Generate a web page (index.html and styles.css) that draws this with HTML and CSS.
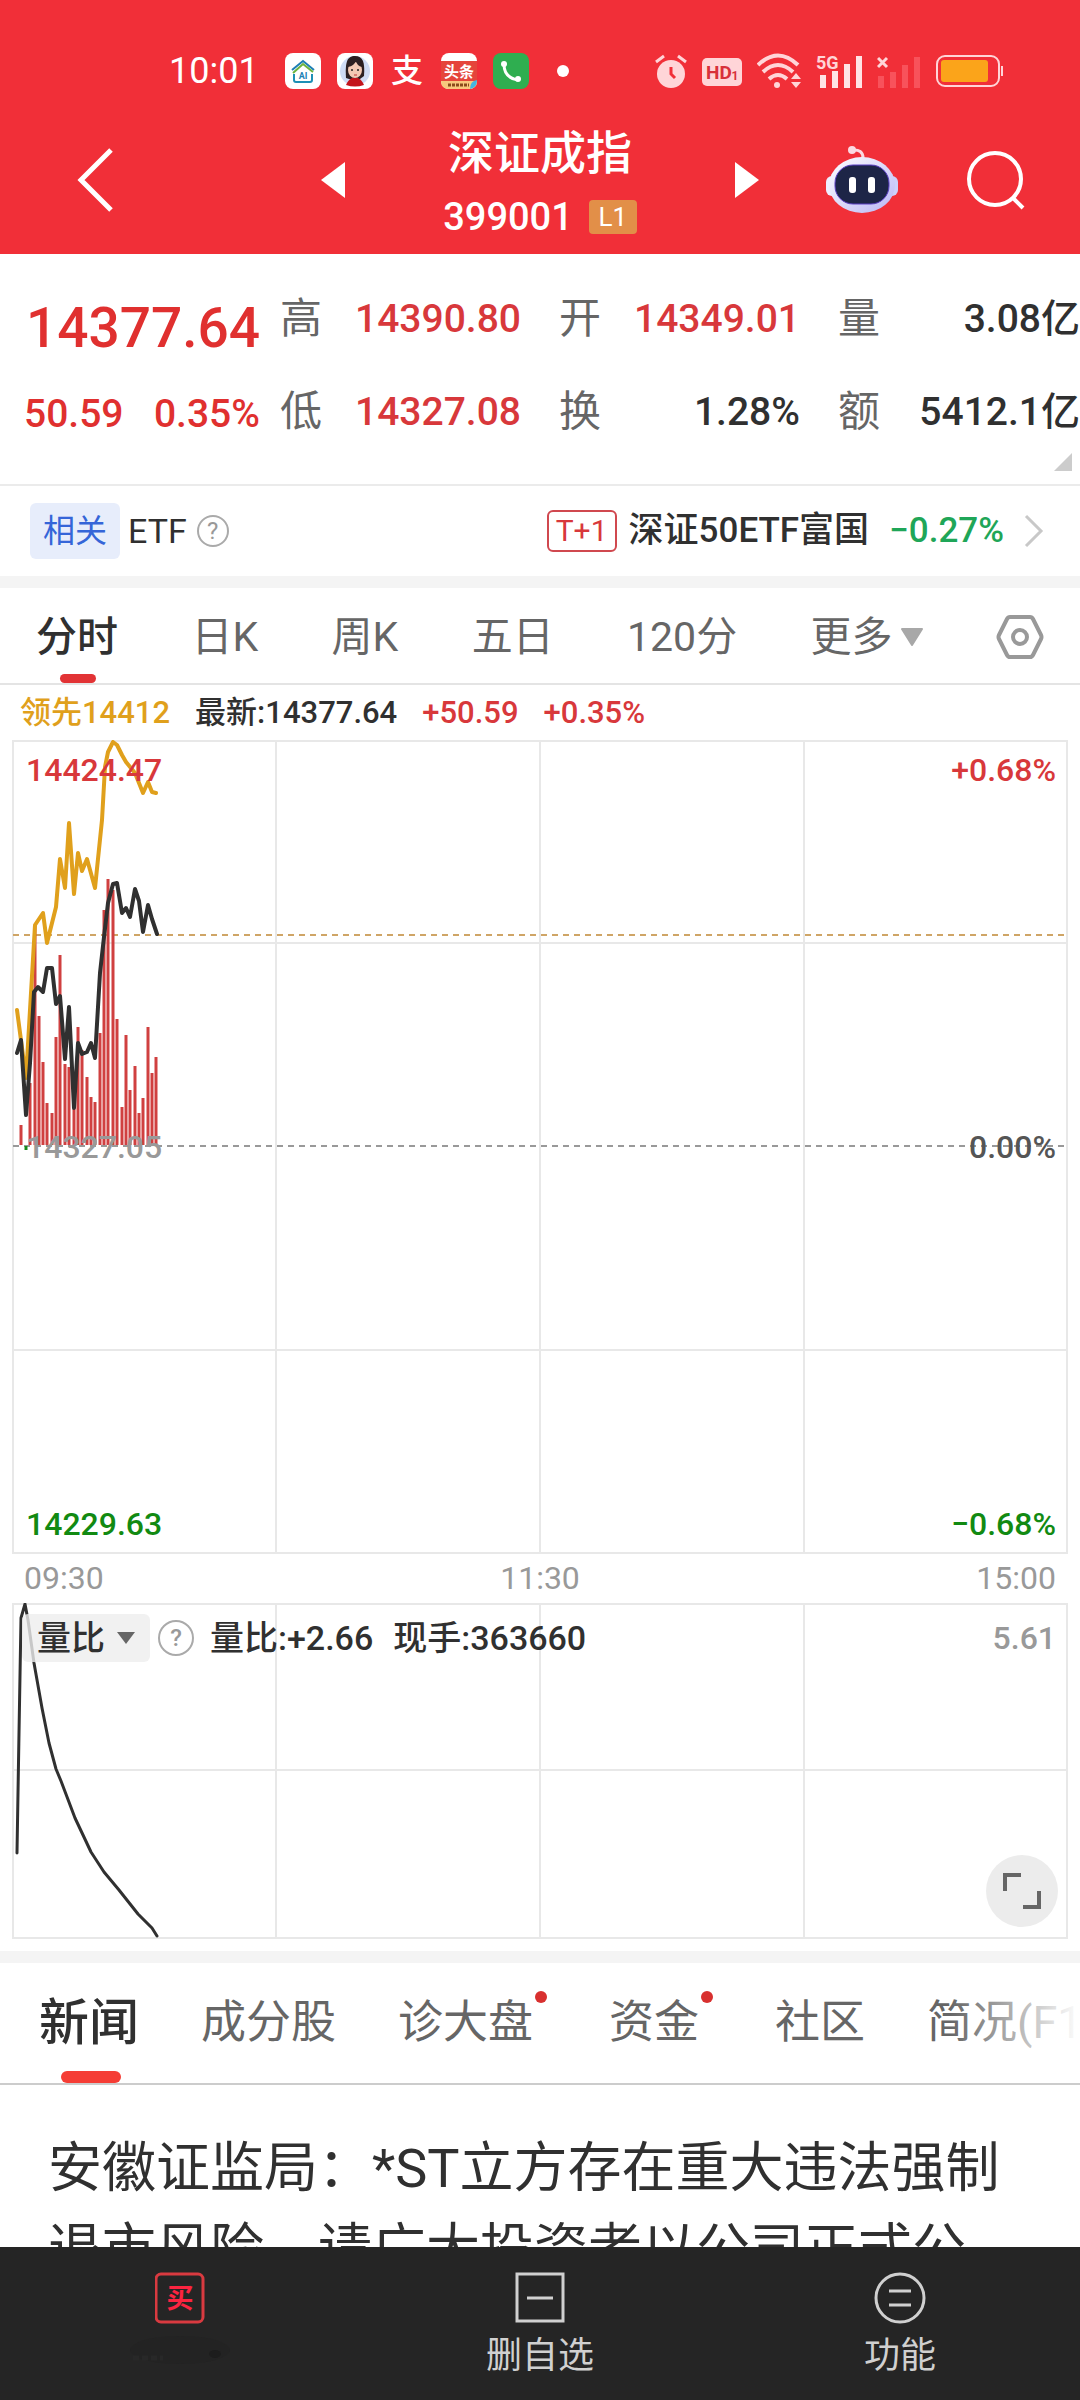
FILE: index.html
```html
<!doctype html>
<html lang="zh-CN">
<head>
    <meta charset="UTF-8">
    <meta name="viewport" content="width=device-width, initial-scale=1.0">
    <title>深证成指 399001</title>
    <link rel="stylesheet" href="styles.css">
</head>
<body>
    <header class="header">
        <div class="status">
            <div class="status-left">
                <span class="clock">10:01</span>
                <svg width="36" height="38" viewBox="0 0 36 38">
                    <rect y="1" width="36" height="36" rx="8" fill="#fff"/>
                    <path d="M7 18 18 9l11 9" fill="none" stroke="#1d7fb5" stroke-width="2"/>
                    <path d="M8 21 18 12l10 8" fill="none" stroke="#6cb33f" stroke-width="2"/>
                    <path d="M9 22v6q0 2 2 2h14q2 0 2-2v-6" fill="none" stroke="#1d8fb5" stroke-width="2"/>
                    <text x="18" y="27" font-size="9" font-weight="700" text-anchor="middle" fill="#1d7fb5">AI</text>
                </svg>
                <svg width="36" height="38" viewBox="0 0 36 38">
                    <rect y="1" width="36" height="36" rx="8" fill="#fff"/>
                    <circle cx="18" cy="19" r="15" fill="#cfdcf5"/>
                    <path d="M9 26C8 10 10 4 18 4s10 6 9 20l-4 3H12z" fill="#2c2022"/>
                    <ellipse cx="18" cy="18" rx="7" ry="8" fill="#f3c9b4"/>
                    <path d="M11 15q6-1 8-6 1 5 6 6-1-9-7-9t-7 9z" fill="#2c2022"/>
                    <circle cx="15" cy="18" r="1" fill="#222"/>
                    <circle cx="21" cy="18" r="1" fill="#222"/>
                    <path d="M17 23h3" stroke="#b33" stroke-width="1"/>
                    <path d="M9 33q2-5 6-7h6q4 2 6 7-9 3-18 0z" fill="#c3141b"/>
                </svg>
                <svg width="36" height="38" viewBox="0 0 36 38">
                    <text x="18" y="30" font-size="32" font-weight="500" text-anchor="middle" fill="#fff">支</text>
                </svg>
                <svg width="36" height="38" viewBox="0 0 36 38">
                    <rect y="1" width="36" height="36" rx="8" fill="#fff"/>
                    <path d="M0 9h36v20H0z" fill="#e5453b"/>
                    <path d="M0 29h36q0 8-8 8H8q-8 0-8-8z" fill="#f7c77d"/>
                    <path d="M29 37q0-8 7-9 0 8-7 9z" fill="#42b4e0"/>
                    <text x="18" y="25" font-size="15" font-weight="700" text-anchor="middle" fill="#fff">头条</text>
                    <path d="M7 33h21" stroke="#8a4a1c" stroke-width="3" stroke-dasharray="3 1"/>
                </svg>
                <svg width="36" height="38" viewBox="0 0 36 38">
                    <rect y="1" width="36" height="36" rx="8" fill="#2fae50"/>
                    <path d="M11 12q0 14 14 16" fill="none" stroke="#fff" stroke-width="3"/>
                    <circle cx="11" cy="12" r="3" fill="#fff"/>
                    <circle cx="25" cy="27" r="3" fill="#fff"/>
                </svg>
                <i class="dot"></i>
            </div>
            <div class="status-right">
                <svg width="32" height="36" viewBox="0 0 32 36">
                    <circle cx="16" cy="21" r="14" fill="#ffd5d8"/>
                    <path d="M1 9l8-6M31 9l-8-6" stroke="#ffd5d8" stroke-width="3"/>
                    <path d="M16 14v7l4 4" fill="none" stroke="#f12f38" stroke-width="3"/>
                </svg>
                <svg width="40" height="36" viewBox="0 0 40 36">
                    <rect y="5" width="40" height="28" rx="5" fill="#ffd5d8"/>
                    <text x="17" y="26" font-size="19" font-weight="700" text-anchor="middle" fill="#d8303a">HD</text>
                    <text x="33" y="27" font-size="12" font-weight="700" text-anchor="middle" fill="#d8303a">1</text>
                </svg>
                <svg width="44" height="36" viewBox="0 0 44 36">
                    <g fill="none" stroke="#ffd5d8" stroke-width="4">
                        <path d="M1 12q20-19 40 0"/>
                        <path d="M6 19q15-14 30 0"/>
                        <path d="M12 26q9-8 18 0"/>
                    </g>
                    <circle cx="20" cy="32" r="3" fill="#ffd5d8"/>
                    <path d="M34 26l5-6 5 6zM34 29l5 6 5-6z" fill="#ffd5d8"/>
                </svg>
                <svg width="46" height="36" viewBox="0 0 46 36">
                    <text x="0" y="16" font-size="18" font-weight="700" fill="#ffd5d8">5G</text>
                    <path d="M4 22h6v13H4zM16 18h6v17h-6zM28 11h6v24h-6zM40 3h6v32h-6z" fill="#ffe3e5"/>
                </svg>
                <svg width="44" height="36" viewBox="0 0 44 36">
                    <path d="M1 5l9 9M10 5l-9 9" stroke="#ffd5d8" stroke-width="3"/>
                    <path d="M1 23h6v12H1zM13 19h6v16h-6zM25 12h6v23h-6zM37 4h6v31h-6z" fill="#f8525b"/>
                </svg>
                <svg width="68" height="36" viewBox="0 0 68 36">
                    <rect x="1" y="3" width="62" height="30" rx="8" fill="none" stroke="#ffd5d8" stroke-width="2"/>
                    <rect x="5" y="7" width="47" height="22" rx="3" fill="#fba41a"/>
                    <path d="M66 13v10" stroke="#ffd5d8" stroke-width="2"/>
                </svg>
            </div>
        </div>
        <div class="nav">
            <button class="icon-btn back" aria-label="返回">
                <svg width="38" height="66" viewBox="0 0 38 66"><path d="M35 3 5 33l30 30" fill="none" stroke="#fff" stroke-width="5"/></svg>
            </button>
            <div class="switcher">
                <button class="icon-btn" aria-label="上一个">
                    <svg width="24" height="36" viewBox="0 0 24 36"><path d="M24 0v36L0 18z" fill="#fff"/></svg>
                </button>
                <div class="title">
                    <h1>深证成指</h1>
                    <p>399001 <span class="level">L1</span></p>
                </div>
                <button class="icon-btn" aria-label="下一个">
                    <svg width="24" height="36" viewBox="0 0 24 36"><path d="M0 0v36l24-18z" fill="#fff"/></svg>
                </button>
            </div>
            <div class="tools">
                <button class="icon-btn" aria-label="智能助手">
                    <svg width="72" height="68" viewBox="0 0 72 68">
                        <defs>
                            <linearGradient id="shell" x1="0" y1="0" x2="1" y2="1">
                                <stop offset="0" stop-color="#fff"/>
                                <stop offset="1" stop-color="#b9b6f5"/>
                            </linearGradient>
                        </defs>
                        <path d="M26 4q11-1 11 8" fill="none" stroke="#fbd9e2" stroke-width="3"/>
                        <circle cx="26" cy="4" r="4" fill="#fbd9e2"/>
                        <rect x="0" y="30" width="12" height="20" rx="6" fill="#eef"/>
                        <rect x="60" y="30" width="12" height="20" rx="6" fill="#ccd0fa"/>
                        <ellipse cx="36" cy="39" rx="33" ry="28" fill="url(#shell)"/>
                        <rect x="9" y="19" width="54" height="39" rx="18" fill="#1d2547" stroke="#5b3fc4" stroke-width="1"/>
                        <rect x="23" y="31" width="7" height="16" rx="3" fill="#fff"/>
                        <rect x="42" y="31" width="7" height="16" rx="3" fill="#fff"/>
                    </svg>
                </button>
                <button class="icon-btn" aria-label="搜索">
                    <svg width="60" height="62" viewBox="0 0 60 62">
                        <circle cx="29" cy="30" r="26" fill="none" stroke="#fff" stroke-width="4"/>
                        <path d="M47 49l10 10" stroke="#fff" stroke-width="4"/>
                    </svg>
                </button>
            </div>
        </div>
    </header>

    <main class="main">
        <section class="quote">
            <div class="quote-price">
                <div class="price">14377.64</div>
                <div class="change"><span>50.59</span><span>0.35%</span></div>
            </div>
            <dl class="quote-grid">
                <div><dt>高</dt><dd class="up">14390.80</dd></div>
                <div><dt>开</dt><dd class="up">14349.01</dd></div>
                <div><dt>量</dt><dd>3.08亿</dd></div>
                <div><dt>低</dt><dd class="up">14327.08</dd></div>
                <div><dt>换</dt><dd>1.28%</dd></div>
                <div><dt>额</dt><dd>5412.1亿</dd></div>
            </dl>
            <i class="corner"></i>
        </section>

        <section class="etf">
            <span class="chip">相关</span>
            <span class="etf-name">ETF</span>
            <button class="help" aria-label="说明">?</button>
            <a class="etf-link" href="#">
                <span class="t1">T+1</span>
                <span class="fund">深证50ETF富国</span>
                <span class="down">−0.27%</span>
                <svg width="20" height="34" viewBox="0 0 20 34"><path d="M2 2l15 15L2 32" fill="none" stroke="#c8c8c8" stroke-width="3"/></svg>
            </a>
        </section>

        <nav class="periods">
            <button class="active">分时</button>
            <button>日K</button>
            <button>周K</button>
            <button>五日</button>
            <button>120分</button>
            <button class="more">更多<svg width="22" height="18" viewBox="0 0 22 18"><path d="M1 1h20L11 17z" fill="#a8a8a8" stroke="#a8a8a8" stroke-width="2" stroke-linejoin="round"/></svg></button>
            <button aria-label="设置">
                <svg width="48" height="46" viewBox="0 0 48 46">
                    <path d="M14 3h20q2 0 3 2l8 16q1 2 0 4l-8 16q-1 2-3 2H14q-2 0-3-2L3 25q-1-2 0-4l8-16q1-2 3-2z" fill="none" stroke="#999" stroke-width="4"/>
                    <circle cx="24" cy="23" r="7" fill="none" stroke="#999" stroke-width="4"/>
                </svg>
            </button>
        </nav>

        <section class="charts">
            <div class="legend">
                <span class="lead">领先14412</span>
                <span>最新:14377.64</span>
                <span class="up">+50.59</span>
                <span class="up">+0.35%</span>
            </div>
            <div class="chart chart-price">
                <svg viewBox="0 0 1056 814" preserveAspectRatio="none">
                    <path class="grid" d="M1 1h1054v812H1zM264 1v812M528 1v812M792 1v812M1 203h1054M1 610h1054"/>
                    <path class="base" d="M1 406h1054"/>
                    <path class="last" d="M1 195h1054"/>
                    <path class="vol" d="M9 405V385M18 405V343M23 405V185M27 405V276M31 405V322M35 405V363M40 405V373M44 405V297M48 405V215M53 405V324M57 405V327M62 405V357M66 405V287M70 405V310M75 405V337M79 405V357M83 405V362M88 405V293M92 405V170M96 405V139M101 405V150M105 405V279M110 405V367M114 405V295M118 405V350M123 405V326M127 405V373M131 405V358M136 405V287M140 405V333M144 405V317"/>
                    <path class="vol-down" d="M14 406v4"/>
                    <polyline class="line-lead" points="5,270 14,338 23,185 31,173 35,203 44,167 48,119 53,148 57,83 62,154 66,113 70,131 75,119 83,148 90,80 93,27 96,12 101,2 105,5 110,15 114,22 123,33 131,53 136,42 140,52 144,53"/>
                    <polyline class="line-now" points="5,313 9,300 14,375 18,323 22,252 26,247 31,252 35,228 40,228 44,264 48,256 53,319 57,267 62,368 66,303 70,314 75,312 79,303 83,318 88,233 92,197 96,163 101,144 105,143 110,173 114,168 118,177 123,149 127,161 131,192 136,165 140,179 145,194"/>
                </svg>
                <div class="scale">
                    <div class="up"><span>14424.47</span><span>+0.68%</span></div>
                    <div class="mid"><span>14327.05</span><span class="zero">0.00%</span></div>
                    <div class="low"><span>14229.63</span><span>−0.68%</span></div>
                </div>
            </div>
            <div class="times"><span>09:30</span><span>11:30</span><span>15:00</span></div>
            <div class="chart chart-ratio">
                <svg viewBox="0 0 1056 336" preserveAspectRatio="none">
                    <path class="grid" d="M1 1h1054v334H1zM264 1v334M528 1v334M792 1v334M1 167h1054"/>
                    <polyline class="line-ratio" points="5,250 7,130 9,15 13,1 16,17 22,60 30,105 37,140 44,166 49,178 63,215 79,249 92,269 107,287 126,311 140,325 145,333"/>
                </svg>
                <div class="ratio-bar">
                    <label class="picker">
                        <select aria-label="指标">
                            <option>量比</option>
                        </select>
                        <svg width="20" height="14" viewBox="0 0 20 14"><path d="M1 1h18l-9 12z" fill="#666"/></svg>
                    </label>
                    <button class="help" aria-label="说明">?</button>
                    <span>量比:+2.66</span>
                    <span>现手:363660</span>
                    <span class="max">5.61</span>
                </div>
                <button class="expand" aria-label="全屏">
                    <svg width="38" height="38" viewBox="0 0 38 38"><path d="M2 19V3h16M36 19v16H20" fill="none" stroke="#666" stroke-width="4"/></svg>
                </button>
            </div>
        </section>

        <nav class="tabs">
            <a class="active" href="#">新闻</a>
            <a href="#">成分股</a>
            <a class="new" href="#">诊大盘</a>
            <a class="new" href="#">资金</a>
            <a href="#">社区</a>
            <a href="#">简况(F10)</a>
        </nav>

        <article class="news">
            安徽证监局：*ST立方存在重大违法强制退市风险，请广大投资者以公司正式公
        </article>
    </main>

    <footer class="toolbar">
        <button aria-label="买">
            <svg width="50" height="52" viewBox="0 0 50 52">
                <rect x="1" y="2" width="47" height="48" rx="5" fill="none" stroke="#d93a40" stroke-width="3"/>
                <text x="25" y="36" font-size="27" font-weight="700" text-anchor="middle" fill="#fb2440">买</text>
            </svg>
            <svg width="110" height="40" viewBox="0 0 110 40">
                <ellipse cx="55" cy="18" rx="50" ry="14" fill="#232323"/>
                <ellipse cx="90" cy="22" rx="6" ry="4" fill="#1d1d1d"/>
                <path d="M8 26h30" stroke="#282828" stroke-width="5" stroke-dasharray="6 3"/>
            </svg>
        </button>
        <button>
            <svg width="50" height="52" viewBox="0 0 50 52"><path d="M2 2h46v47H2zM12 26h26" fill="none" stroke="#d0d0d0" stroke-width="3"/></svg>
            删自选
        </button>
        <button>
            <svg width="52" height="52" viewBox="0 0 52 52">
                <circle cx="26" cy="26" r="24" fill="none" stroke="#d0d0d0" stroke-width="3"/>
                <path d="M15 19h22M15 33h22" stroke="#d0d0d0" stroke-width="3"/>
            </svg>
            功能
        </button>
    </footer>
</body>
</html>
```

FILE: styles.css
```css
*{
    box-sizing: border-box;
}
body{
    margin: 0;
    height: 100vh;
    display: flex;
    flex-direction: column;
    background: #fff;
    color: #303030;
    font-family: Roboto, "Noto Sans CJK SC", sans-serif;
    font-size: 34px;
    line-height: 48px;
}
h1,p,dl,dd{
    margin: 0;
    font-weight: 500;
}
button,select{
    border: 0;
    padding: 0;
    background: none;
    color: inherit;
    font: inherit;
}
a{
    color: inherit;
    text-decoration: none;
}
svg{
    display: block;
    flex: none;
}
.up{
    color: #d8383b;
}
.down{
    color: #1fa658;
}

/* header */
.header{
    background: #f12f38;
    color: #fff;
    height: 254px;
    flex: none;
}
.status{
    display: flex;
    justify-content: space-between;
    align-items: center;
    height: 102px;
    padding: 40px 76px 0 169px;
}
.status-left,.status-right{
    display: flex;
    align-items: center;
}
.status-left{
    gap: 16px;
}
.status-right{
    gap: 15px;
}
.clock{
    font-size: 36px;
    margin-right: 10px;
}
.dot{
    width: 12px;
    height: 12px;
    margin-left: 12px;
    border-radius: 50%;
    background: #fff;
}
.nav{
    display: grid;
    grid-template-columns: 1fr 438px 1fr;
    align-items: center;
    height: 152px;
    padding: 4px 54px 0;
}
.nav .back{
    padding-left: 22px;
    justify-self: start;
}
.switcher{
    display: flex;
    align-items: center;
    justify-content: space-between;
}
.title{
    padding-top: 10px;
}
.title h1{
    font-size: 46px;
    line-height: 64px;
    text-align: center;
}
.title p{
    display: flex;
    align-items: center;
    gap: 16px;
    font-size: 38px;
    line-height: 64px;
}
.level{
    width: 48px;
    border-radius: 4px;
    background: #e28f48;
    font-size: 26px;
    line-height: 34px;
    font-weight: 400;
    text-align: center;
}
.tools{
    display: flex;
    align-items: center;
    justify-content: flex-end;
    gap: 68px;
}

.main{
    flex: 1;
    min-height: 0;
    overflow: hidden;
}

/* quote */
.quote{
    position: relative;
    display: flex;
    height: 232px;
    padding-top: 18px;
    border-bottom: 2px solid #ebebeb;
    font-size: 39px;
    font-weight: 500;
}
.quote-price{
    width: 280px;
    padding: 10px 20px 0 24px;
    color: #e0302f;
    text-align: right;
}
.price{
    font-size: 55px;
    line-height: 92px;
}
.change{
    display: flex;
    justify-content: space-between;
    line-height: 80px;
}
.quote-grid{
    flex: 1;
    display: grid;
    grid-template-columns: 279fr 279fr 242fr;
    grid-auto-rows: 93px;
}
.quote-grid div{
    display: flex;
    justify-content: space-between;
    align-items: center;
    padding-right: 38px;
}
.quote-grid div:nth-child(3n){
    padding-right: 0;
}
.quote-grid dt{
    font-size: 42px;
    font-weight: 400;
    color: #666;
}
.corner{
    position: absolute;
    right: 8px;
    bottom: 13px;
    border-left: 18px solid transparent;
    border-bottom: 18px solid #ccc;
}

/* related etf */
.etf{
    display: flex;
    align-items: center;
    height: 90px;
    padding: 0 36px 0 30px;
}
.chip{
    width: 90px;
    border-radius: 6px;
    background: #e7edfb;
    color: #3565d8;
    font-size: 32px;
    line-height: 56px;
    text-align: center;
}
.etf-name{
    margin: 0 10px 0 8px;
}
.help{
    width: 32px;
    height: 32px;
    border: 2px solid #aaa;
    border-radius: 50%;
    color: #999;
    font-size: 24px;
    line-height: 28px;
}
.etf-link{
    display: flex;
    align-items: center;
    margin-left: auto;
    font-size: 35px;
    font-weight: 500;
}
.t1{
    width: 70px;
    border: 2px solid #d0484f;
    border-radius: 6px;
    color: #d8383b;
    font-size: 30px;
    line-height: 38px;
    font-weight: 400;
    text-align: center;
}
.fund{
    margin: 0 20px 0 12px;
}
.etf-link svg{
    margin-left: 20px;
}

/* periods */
.periods{
    display: flex;
    justify-content: space-between;
    align-items: center;
    height: 109px;
    padding: 0 36px;
    border-top: 12px solid #f4f4f4;
    border-bottom: 2px solid #e4e4e4;
    color: #666;
    font-size: 41px;
}
.periods button{
    position: relative;
    padding-top: 3px;
    line-height: 92px;
}
.periods .active,.tabs .active{
    color: #303030;
    font-weight: 500;
}
.periods .active::after,.tabs .active::after{
    content: "";
    position: absolute;
    bottom: 0;
    left: 24px;
    width: 36px;
    height: 9px;
    border-radius: 5px;
    background: #e23335;
}
.periods .more{
    display: flex;
    align-items: center;
    gap: 8px;
}

/* charts */
.charts{
    padding: 0 12px 12px;
}
.legend{
    display: flex;
    gap: 25px;
    padding-left: 8px;
    font-size: 31px;
    line-height: 55px;
    font-weight: 500;
}
.lead{
    color: #e0a01c;
}
.chart{
    position: relative;
}
.chart > svg{
    width: 100%;
    height: 100%;
}
.chart-price{
    height: 814px;
}
.chart-ratio{
    height: 336px;
}
.chart path,.chart polyline{
    vector-effect: non-scaling-stroke;
}
.chart polyline{
    fill: none;
    stroke-width: 4;
    stroke-linejoin: round;
    stroke-linecap: round;
}
.grid{
    fill: none;
    stroke: #e8e8e8;
    stroke-width: 2;
}
.base{
    stroke: #999;
    stroke-width: 2;
    stroke-dasharray: 6 5;
}
.last{
    stroke: #cfa566;
    stroke-width: 2;
    stroke-dasharray: 6 5;
}
.vol{
    stroke: #d04040;
    stroke-width: 3;
}
.vol-down{
    stroke: #1a8a1a;
    stroke-width: 3;
}
.line-lead{
    stroke: #e0a01c;
}
.line-now{
    stroke: #303030;
}
.chart .line-ratio{
    stroke: #303030;
    stroke-width: 3;
}
.scale{
    position: absolute;
    inset: 0;
    display: flex;
    flex-direction: column;
    justify-content: space-between;
    padding: 6px 12px 6px 14px;
    font-size: 32px;
    font-weight: 500;
}
.scale div,.times{
    display: flex;
    justify-content: space-between;
}
.mid{
    color: #999;
}
.zero{
    color: #555;
}
.low{
    color: #128a12;
}
.times{
    padding: 0 12px;
    color: #999;
    font-size: 32px;
    line-height: 49px;
}
.ratio-bar{
    position: absolute;
    top: 11px;
    left: 10px;
    right: 12px;
    display: flex;
    align-items: center;
    font-weight: 500;
}
.picker{
    position: relative;
    width: 128px;
    margin-right: 8px;
    border-radius: 6px;
    background: rgba(238, 238, 238, .8);
}
.picker select{
    display: block;
    width: 100%;
    height: 48px;
    padding-left: 15px;
    appearance: none;
}
.picker svg{
    position: absolute;
    top: 17px;
    right: 14px;
}
.ratio-bar .help{
    width: 36px;
    height: 36px;
    margin-right: 16px;
    line-height: 32px;
}
.ratio-bar span{
    margin-right: 20px;
}
.ratio-bar .max{
    margin: 0 0 0 auto;
    color: #999;
    font-size: 32px;
}
.expand{
    position: absolute;
    right: 10px;
    bottom: 12px;
    width: 72px;
    height: 72px;
    border-radius: 50%;
    background: #ececec;
}
.expand svg{
    margin: 0 auto;
}

/* bottom tabs */
.tabs{
    display: flex;
    gap: 62px;
    align-items: center;
    position: relative;
    height: 134px;
    padding-left: 39px;
    border-top: 12px solid #f4f4f4;
    border-bottom: 2px solid #ccc;
    color: #666;
    font-size: 45px;
    overflow: hidden;
    white-space: nowrap;
}
.tabs::after{
    content: "";
    position: absolute;
    top: 0;
    right: 0;
    bottom: 0;
    width: 130px;
    background: linear-gradient(to right, rgba(255, 255, 255, 0), #fff);
}
.tabs a{
    position: relative;
    line-height: 120px;
}
.tabs .active{
    font-size: 50px;
}
.tabs .active::after{
    left: 22px;
    width: 60px;
    height: 12px;
    border-radius: 6px;
    background: #f53d35;
}
.tabs .new{
    padding-right: 14px;
}
.tabs .new::after{
    content: "";
    position: absolute;
    top: 28px;
    right: 0;
    width: 12px;
    height: 12px;
    border-radius: 50%;
    background: #d8302f;
}
.news{
    padding: 43px 72px 0 48px;
    font-size: 54px;
    line-height: 81px;
}

/* toolbar */
.toolbar{
    flex: none;
    display: grid;
    grid-template-columns: repeat(3, 1fr);
    height: 153px;
    background: #252525;
    color: #d0d0d0;
    font-size: 36px;
}
.toolbar button{
    display: flex;
    flex-direction: column;
    align-items: center;
    gap: 8px;
    padding-top: 25px;
}
```
